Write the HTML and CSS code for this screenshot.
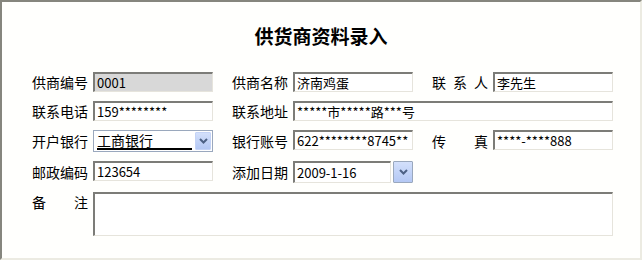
FILE: index.html
```html
<!DOCTYPE html>
<html lang="zh-CN">
<head>
    <meta charset="UTF-8">
    <title>供货商资料录入</title>
    <link rel="stylesheet" href="styles.css">
</head>
<body>
<div class="panel">
    <h1 class="title">供货商资料录入</h1>
    <form class="supplier-form">
        <label class="field-label">供商编号</label>
        <input type="text" class="text-box readonly" value="0001" readonly>
        <label class="field-label">供商名称</label>
        <input type="text" class="text-box" value="济南鸡蛋">
        <label class="field-label">联系人</label>
        <input type="text" class="text-box" value="李先生">

        <label class="field-label">联系电话</label>
        <input type="text" class="text-box" value="159********">
        <label class="field-label">联系地址</label>
        <input type="text" class="text-box wide" value="*****市*****路***号">

        <label class="field-label">开户银行</label>
        <div class="combo">
            <span class="combo-text">工商银行</span>
            <span class="drop-btn">
                <svg width="9" height="6" viewBox="0 0 9 6"><path d="M1 1 L4.5 4.5 L8 1" fill="none" stroke="#4d6185" stroke-width="2"/></svg>
            </span>
        </div>
        <label class="field-label">银行账号</label>
        <input type="text" class="text-box" value="622********8745**">
        <label class="field-label">传真</label>
        <input type="text" class="text-box" value="****-****888">

        <label class="field-label">邮政编码</label>
        <input type="text" class="text-box" value="123654">
        <label class="field-label">添加日期</label>
        <div class="date-field">
            <input type="text" class="text-box date-box" value="2009-1-16">
            <span class="drop-btn tall">
                <svg width="9" height="6" viewBox="0 0 9 6"><path d="M1 1 L4.5 4.5 L8 1" fill="none" stroke="#4d6185" stroke-width="2"/></svg>
            </span>
        </div>

        <label class="field-label top">备注</label>
        <textarea class="text-box memo"></textarea>
    </form>
</div>
</body>
</html>
```

FILE: styles.css
```css
body {
    margin: 0;
    padding: 0;
    background-color: #fff;
    font-family: "Noto Sans CJK SC", sans-serif;
}

.panel {
    box-sizing: border-box;
    width: 642px;
    height: 260px;
    background-color: #fffffd;
    border-top: 2px solid #86867e;
    border-left: 2px solid #86867e;
    border-right: 2px solid #ecebe2;
    border-bottom: 2px solid #ecebe2;
}

.title {
    margin: 22px 0 0 0;
    height: 24px;
    line-height: 24px;
    font-size: 19px;
    font-weight: bold;
    text-align: center;
    color: #000;
}

.supplier-form {
    display: grid;
    grid-template-columns: 56px 120px 70px 120px 70px 120px;
    grid-template-rows: 20px 20px 22px 22px 44px;
    column-gap: 5px;
    row-gap: 9px;
    margin: 24px 0 0 30px;
}

.field-label {
    width: 56px;
    justify-self: end;
    align-self: center;
    font-size: 14px;
    line-height: 16px;
    color: #000;
    text-align: justify;
    text-align-last: justify;
}

.field-label.top {
    grid-column: 1;
    align-self: start;
    margin-top: 2px;
}

.text-box {
    box-sizing: border-box;
    width: 120px;
    height: 20px;
    margin: 0;
    padding: 0 2px;
    font-family: "Noto Sans CJK SC", sans-serif;
    font-size: 13px;
    color: #000;
    background-color: #fff;
    border-top: 2px solid #7c7c78;
    border-left: 2px solid #7c7c78;
    border-right: 1px solid #e6e4dc;
    border-bottom: 1px solid #e6e4dc;
    outline: none;
}

.text-box.readonly {
    background-color: #d8d8d8;
}

.text-box.wide {
    grid-column: span 3;
    width: 320px;
}

.combo {
    box-sizing: border-box;
    display: flex;
    align-items: center;
    width: 120px;
    height: 22px;
    border: 1px solid #9aa8bd;
    background-color: #fff;
    padding: 0 1px 0 3px;
}

.combo-text {
    flex: 1;
    font-size: 14px;
    line-height: 16px;
    border-bottom: 2px solid #000;
    margin-right: 3px;
}

.drop-btn {
    box-sizing: border-box;
    display: flex;
    align-items: center;
    justify-content: center;
    width: 16px;
    height: 18px;
    background: linear-gradient(#d3e0fb, #b4c8f4);
    border: 1px solid #c4d3f6;
    border-radius: 1px;
}

.drop-btn.tall {
    width: 20px;
    height: 22px;
    border: 1px solid #9aa8bd;
}

.date-field {
    display: flex;
    align-items: center;
    gap: 2px;
}

.date-box {
    width: 98px;
    height: 22px;
}

.memo {
    grid-column: 2 / span 5;
    width: 520px;
    height: 44px;
    resize: none;
}
```
